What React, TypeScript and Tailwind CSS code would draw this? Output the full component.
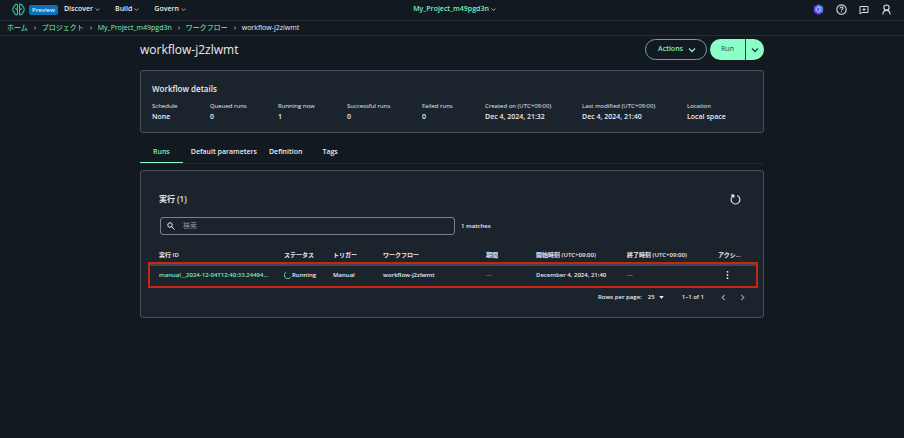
import { Fragment, useState } from "react";

interface Detail {
  label: string;
  value: string;
}

interface Run {
  id: string;
  status: string;
  trigger: string;
  workflow: string;
  duration: string;
  startedAt: string;
  endedAt: string;
}

const menus = ["Discover", "Build", "Govern"];

const crumbs = ["ホーム", "プロジェクト", "My_Project_m49pgd3n", "ワークフロー"];

const details: Detail[] = [
  { label: "Schedule", value: "None" },
  { label: "Queued runs", value: "0" },
  { label: "Running now", value: "1" },
  { label: "Successful runs", value: "0" },
  { label: "Failed runs", value: "0" },
  { label: "Created on (UTC+09:00)", value: "Dec 4, 2024, 21:32" },
  { label: "Last modified (UTC+09:00)", value: "Dec 4, 2024, 21:40" },
  { label: "Location", value: "Local space" },
];

const tabs = [
  { name: "Runs", spacing: "mr-2 px-[13px]" },
  { name: "Default parameters", spacing: "mr-3" },
  { name: "Definition", spacing: "mr-5" },
  { name: "Tags", spacing: "mr-5" },
];

const columns = [
  "実行 ID",
  "ステータス",
  "トリガー",
  "ワークフロー",
  "期間",
  "開始時刻 (UTC+09:00)",
  "終了時刻 (UTC+09:00)",
  "アクシ...",
];

const runs: Run[] = [
  {
    id: "manual__2024-12-04T12:40:33.24494...",
    status: "Running",
    trigger: "Manual",
    workflow: "workflow-j2zlwmt",
    duration: "—",
    startedAt: "December 4, 2024, 21:40",
    endedAt: "—",
  },
];

function Chevron({ className }: { className: string }) {
  return (
    <svg viewBox="0 0 8 8" className={className} fill="none" stroke="currentColor" strokeWidth="1.4">
      <path d="M1 2.5 4 5.5 7 2.5" />
    </svg>
  );
}

function BrainLogo() {
  return (
    <svg viewBox="0 0 24 24" className="size-[13px]" fill="none" strokeWidth="2">
      <defs>
        <linearGradient id="brain" x1="0" y1="0" x2="1" y2="1">
          <stop offset="0" stopColor="#2fd68f" />
          <stop offset="0.6" stopColor="#2cc7a0" />
          <stop offset="1" stopColor="#4db4dc" />
        </linearGradient>
      </defs>
      <g stroke="url(#brain)">
        <path d="M10 2.500C7.500 1.500 5 3 4.800 5.500 2.500 7 1.500 9.500 1.500 12s1 5 3.300 6.500C5 21 7.500 22.500 10 21.500V2.500" />
        <path d="M14 2.500c2.500-1 5 .5 5.200 3 2.300 1.500 3.300 4 3.300 6.500s-1 5-3.300 6.500C19 21 16.500 22.500 14 21.500V2.500" />
        <path d="M6 10l4 2.500M18 10l-4 2.500" />
      </g>
    </svg>
  );
}

function AssistantIcon() {
  return (
    <svg viewBox="0 0 24 24" className="size-[11px]">
      <defs>
        <linearGradient id="assistant" x1="0" y1="1" x2="1" y2="0">
          <stop offset="0" stopColor="#8a1fff" />
          <stop offset="0.5" stopColor="#5b5cf5" />
          <stop offset="1" stopColor="#22b8f0" />
        </linearGradient>
      </defs>
      <path d="M12 .5 22 6v12l-10 5.500L2 18V6z" fill="url(#assistant)" />
      <path d="M16.500 9.500A5.200 5.200 0 1 0 17 13l-4.500-1.500" fill="none" stroke="#e4e2ff" strokeWidth="1.800" />
    </svg>
  );
}

function TopBar() {
  return (
    <header className="grid h-[21px] grid-cols-[1fr_auto_1fr] items-center border-b border-[#262a35] px-3 pb-px">
      <nav className="flex items-center text-[7px] font-semibold">
        <BrainLogo />
        <span className="ml-1 rounded-[2px] bg-[#0972b8] px-[3px] text-[6px] leading-[10px] font-semibold">Preview</span>
        <div className="ml-[6px] flex gap-[15px]">
          {menus.map((menu) => (
            <button key={menu} type="button" className="flex items-center gap-0.5">
              {menu}
              <Chevron className="size-[5px] text-[#b6bec9]" />
            </button>
          ))}
        </div>
      </nav>
      <button type="button" className="ml-[5px] flex items-center gap-0.5 text-[7px] font-semibold text-[#7ef0b8]">
        My_Project_m49pgd3n
        <Chevron className="size-[5px]" />
      </button>
      <div className="flex items-center justify-end gap-3 text-[#dedee3]">
        <button type="button" aria-label="Assistant">
          <AssistantIcon />
        </button>
        <button type="button" aria-label="Help">
          <svg viewBox="0 0 20 20" className="size-[11px]" fill="none" stroke="currentColor" strokeWidth="2">
            <circle cx="10" cy="10" r="8.500" />
            <path d="M7.300 8c0-3.500 5.400-3.500 5.400-.3 0 2-2.700 2-2.700 4M10 13.200v2" />
          </svg>
        </button>
        <button type="button" aria-label="Feedback">
          <svg viewBox="0 0 20 20" className="size-[10px]" fill="none" stroke="currentColor" strokeWidth="2">
            <path d="M2 3h16v12H6l-4 3z" />
            <path d="m10 4.500 1.200 3.300 3.300 1.200-3.300 1.200L10 13.500l-1.200-3.300L5.500 9l3.300-1.200z" fill="currentColor" stroke="none" />
          </svg>
        </button>
        <button type="button" aria-label="Account">
          <svg viewBox="0 0 20 20" className="size-[11px]" fill="none" stroke="currentColor" strokeWidth="2">
            <circle cx="10" cy="6.500" r="4.800" />
            <path d="M3.500 19c0-4.500 2.500-7.500 6.500-7.500s6.500 3 6.500 7.500" />
          </svg>
        </button>
      </div>
    </header>
  );
}

function Breadcrumbs() {
  return (
    <nav aria-label="Breadcrumb" className="flex h-[15px] items-center gap-[5px] border-b border-[#262a35] px-[7px] text-[7px]">
      {crumbs.map((crumb) => (
        <Fragment key={crumb}>
          <a href="#" className="text-[#7ef0b8]">
            {crumb}
          </a>
          <Chevron className="size-[4px] -rotate-90 text-[#d5dae0]" />
        </Fragment>
      ))}
      <span>workflow-j2zlwmt</span>
    </nav>
  );
}

function WorkflowDetails() {
  return (
    <section className="mt-[10px] rounded-[3px] border border-[#4a515c] bg-[#1b232d] px-[11px] pt-[11px] pb-[10px]">
      <h2 className="text-[8px] leading-[14px] font-semibold">Workflow details</h2>
      <dl className="mt-[5px] grid grid-cols-[58fr_68fr_69fr_75fr_63fr_97fr_105fr_65fr]">
        {details.map((d) => (
          <div key={d.label} className="whitespace-nowrap">
            <dt className="text-[6px] leading-[10px]">{d.label}</dt>
            <dd className="text-[7px] leading-[11px] font-semibold">{d.value}</dd>
          </div>
        ))}
      </dl>
    </section>
  );
}

function RunsTable() {
  return (
    <table className="mt-[10px] w-full table-fixed text-left text-[6px] leading-[10px]">
      <colgroup>
        <col className="w-[125px]" />
        <col className="w-[49px]" />
        <col className="w-[50px]" />
        <col className="w-[103px]" />
        <col className="w-[50px]" />
        <col className="w-[91px]" />
        <col className="w-[91px]" />
        <col />
      </colgroup>
      <thead>
        <tr className="h-[19px]">
          {columns.map((column) => (
            <th key={column} className="pl-[9px] font-semibold whitespace-nowrap">
              {column}
            </th>
          ))}
        </tr>
      </thead>
      <tbody>
        {runs.map((run) => (
          <tr key={run.id} className="h-[22px] font-semibold shadow-[inset_0_2px_0_#424650] outline-2 outline-[#c9260f]">
            <td className="pl-[9px] whitespace-nowrap">
              <a href="#" className="text-[#7ef0b8]">
                {run.id}
              </a>
            </td>
            <td className="pl-[9px]">
              <span className="flex items-center">
                <svg viewBox="0 0 12 12" className="size-2 text-[#5fd39a]" fill="none" stroke="currentColor" strokeWidth="1.500">
                  <path d="M3.500 1.500A5.300 5.300 0 1 0 10 9.500" />
                </svg>
                {run.status}
              </span>
            </td>
            <td className="pl-[9px]">{run.trigger}</td>
            <td className="pl-[9px]">{run.workflow}</td>
            <td className="pl-[9px] text-[#7b8490]">{run.duration}</td>
            <td className="pl-[9px] whitespace-nowrap">{run.startedAt}</td>
            <td className="pl-[9px] text-[#7b8490]">{run.endedAt}</td>
            <td className="pl-[17px]">
              <button type="button" aria-label="アクション" className="block">
                <svg viewBox="0 0 4 12" className="h-[10px] w-[3px]" fill="currentColor">
                  <circle cx="2" cy="1.800" r="1.200" />
                  <circle cx="2" cy="6" r="1.200" />
                  <circle cx="2" cy="10.200" r="1.200" />
                </svg>
              </button>
            </td>
          </tr>
        ))}
      </tbody>
    </table>
  );
}

function Pagination() {
  return (
    <div className="mt-[6px] flex items-center justify-end pr-[10px] text-[6px] leading-[10px] font-semibold">
      <label htmlFor="page-size">Rows per page:</label>
      <div className="relative ml-[6px] flex items-center">
        <select id="page-size" className="w-4 appearance-none bg-transparent" defaultValue="25">
          <option>25</option>
          <option>50</option>
        </select>
        <svg viewBox="0 0 6 4" className="pointer-events-none absolute right-0 h-[3px] w-[5px]" fill="currentColor">
          <path d="M0 0h6L3 4z" />
        </svg>
      </div>
      <span className="ml-[18px]">1–1 of 1</span>
      <button type="button" aria-label="Previous page" className="ml-4 text-[#8c95a1]">
        <Chevron className="size-[7px] rotate-90" />
      </button>
      <button type="button" aria-label="Next page" className="ml-3 text-[#8c95a1]">
        <Chevron className="size-[7px] -rotate-90" />
      </button>
    </div>
  );
}

function RunsPanel() {
  return (
    <section className="mt-[6px] rounded-[3px] border border-[#4a515c] bg-[#1b232d] pt-[21px] pr-[7px] pb-[15px] pl-[9px]">
      <div className="flex items-center justify-between pr-[15px] pl-[9px]">
        <h2 className="text-[8px] leading-[14px] font-semibold">実行 (1)</h2>
        <button type="button" aria-label="Refresh">
          <svg viewBox="0 0 20 20" className="size-[11px]" fill="none" stroke="currentColor" strokeWidth="2">
            <path d="M2 2h5v5M7 2.800A8 8 0 1 0 13 2.800" />
          </svg>
        </button>
      </div>
      <div className="mt-[11px] flex items-center gap-[6px] pl-[10px]">
        <div className="flex h-[18px] max-w-[295px] flex-1 items-center gap-2 rounded-[3px] border border-[#7b828d] px-[6px]">
          <svg viewBox="0 0 16 16" className="size-2 shrink-0" fill="none" stroke="currentColor" strokeWidth="2">
            <circle cx="6" cy="6" r="4.500" />
            <path d="m9.500 9.500 5.500 5.500" />
          </svg>
          <input type="text" aria-label="検索" placeholder="検索" className="min-w-0 flex-1 text-[7px] outline-none placeholder:text-[#8c95a1]" />
        </div>
        <span className="text-[6px] font-semibold">1 matches</span>
      </div>
      <RunsTable />
      <Pagination />
    </section>
  );
}

export default function App() {
  const [activeTab, setActiveTab] = useState("Runs");

  return (
    <div className="min-h-screen bg-[#131920] font-['Open_Sans','Noto_Sans_CJK_JP',sans-serif] text-[#ebebf0]">
      <TopBar />
      <Breadcrumbs />
      <main className="mx-auto w-full max-w-[624px]">
        <div className="flex items-center justify-between pt-[3px]">
          <h1 className="text-xs leading-5">workflow-j2zlwmt</h1>
          <div className="flex items-center gap-[3px] text-[7px]">
            <button type="button" className="flex h-[21px] items-center gap-[5px] rounded-full border border-[#5fae8c] pr-[10px] pl-3 font-semibold text-[#7ef0b8]">
              Actions
              <Chevron className="size-2" />
            </button>
            <div className="flex h-[21px] overflow-hidden rounded-full bg-[#8cffc9] text-[#1d4a3a]">
              <button type="button" className="w-[35px] font-medium">
                Run
              </button>
              <button type="button" aria-label="Run options" className="flex w-[19px] items-center justify-center border-l border-[#1d4a3a]">
                <Chevron className="size-2" />
              </button>
            </div>
          </div>
        </div>
        <WorkflowDetails />
        <div role="tablist" className="mt-[7px] flex border-b border-[#22272f] text-[7px] font-semibold">
          {tabs.map((tab) => (
            <button
              key={tab.name}
              type="button"
              role="tab"
              aria-selected={tab.name === activeTab}
              onClick={() => setActiveTab(tab.name)}
              className={`h-[23px] border-b pt-[3px] ${tab.spacing} ${
                tab.name === activeTab ? "border-[#8cffc9] text-[#7ef0b8]" : "border-transparent"
              }`}
            >
              {tab.name}
            </button>
          ))}
        </div>
        <RunsPanel />
      </main>
    </div>
  );
}
